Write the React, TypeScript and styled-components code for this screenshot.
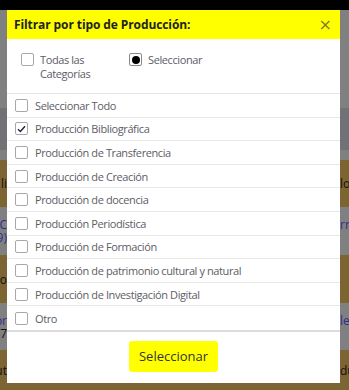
import React from "react";
import styled, { createGlobalStyle } from "styled-components";

const GlobalStyle = createGlobalStyle`
  html, body { margin: 0; padding: 0; }
  body {
    background: #808080;
    font-family: "Open Sans", "Noto Sans", sans-serif;
    overflow: hidden;
  }
`;

const Page = styled.div`
  position: relative;
  width: 349px;
  height: 390px;
  overflow: hidden;
  display: flex;
  flex-direction: column;
`;

const TopBar = styled.div`
  height: 10px;
  background: #000;
  flex: none;
`;

const Band = styled.div<{ $h: number; $tone: "gray" | "dark" | "brown" }>`
  flex: none;
  height: ${(p) => p.$h}px;
  background: ${(p) =>
    p.$tone === "brown" ? "#7d6433" : p.$tone === "dark" ? "#717275" : "#808080"};
  display: flex;
  flex-direction: column;
  justify-content: center;
  gap: 0;
  font-size: 12px;
  line-height: 13px;
`;

const BandLine = styled.div<{ $blue?: boolean }>`
  display: flex;
  justify-content: space-between;
  height: 13px;
  overflow: hidden;
  color: ${(p) => (p.$blue ? "#2b2f8a" : "#111")};
  white-space: nowrap;
`;

const EdgeLeft = styled.span`
  width: 7px;
  overflow: hidden;
  display: flex;
  justify-content: flex-end;
`;

const EdgeRight = styled.span`
  width: 9px;
  overflow: hidden;
  display: flex;
  justify-content: flex-start;
`;

const Overlay = styled.div`
  position: absolute;
  top: 10px;
  left: 7px;
  width: 333px;
  height: 373px;
  background: #fff;
  display: flex;
  flex-direction: column;
`;

const Header = styled.div`
  height: 29px;
  flex: none;
  background: #ffff00;
  display: flex;
  align-items: center;
  justify-content: space-between;
  padding: 0 8px 0 7px;
`;

const Title = styled.div`
  font-size: 12px;
  font-weight: 700;
  color: #222;
  letter-spacing: -0.1px;
`;

const Close = styled.div`
  font-size: 16px;
  line-height: 16px;
  color: #7f7f30;
  font-family: "DejaVu Sans", sans-serif;
`;

const ScopeRow = styled.div`
  height: 55px;
  flex: none;
  box-sizing: border-box;
  border-bottom: 1px solid #e6e6e6;
  display: flex;
  align-items: flex-start;
  padding: 14px 0 0 14px;
`;

const ScopeOption = styled.div<{ $w?: number }>`
  display: flex;
  align-items: flex-start;
  gap: 6px;
  width: ${(p) => (p.$w ? `${p.$w}px` : "auto")};
  font-size: 11px;
  line-height: 13.5px;
  letter-spacing: -0.4px;
  color: #5d5d66;
`;

const OptionText = styled.span<{ $w?: number }>`
  width: ${(p) => (p.$w ? `${p.$w}px` : "auto")};
`;

const Box = styled.span`
  flex: none;
  width: 11px;
  height: 11px;
  border: 1px solid #a8a8a8;
  border-radius: 2px;
  background: #fff;
  display: inline-flex;
  align-items: center;
  justify-content: center;
`;

const RadioBox = styled(Box)`
  border-color: #8a8a8a;
  &::after {
    content: "";
    width: 8px;
    height: 8px;
    border-radius: 50%;
    background: #000;
  }
`;

const List = styled.div`
  flex: none;
  display: flex;
  flex-direction: column;
  border-bottom: 2px solid #dcdcdc;
`;

const Row = styled.div`
  height: 23.6px;
  box-sizing: border-box;
  border-bottom: 1px solid #e8e8e8;
  display: flex;
  align-items: center;
  padding-left: 8px;
  gap: 7px;
  font-size: 11px;
  letter-spacing: -0.4px;
  color: #5d5d66;
  &:last-child {
    border-bottom: none;
  }
`;

const Footer = styled.div`
  flex: 1;
  display: flex;
  justify-content: center;
  padding-top: 9px;
`;

const Button = styled.button`
  width: 89px;
  height: 31px;
  background: #ffff00;
  border: none;
  border-radius: 3px;
  font-family: "Open Sans", "Noto Sans", sans-serif;
  font-size: 13px;
  color: #333;
  padding: 0;
`;

const Check = () => (
  <svg width="9" height="8" viewBox="0 0 9 8">
    <path d="M1 4.2 L3.4 6.5 L8 1.2" fill="none" stroke="#1b2540" strokeWidth="1.4" />
  </svg>
);

const items = [
  { label: "Seleccionar Todo", checked: false },
  { label: "Producción Bibliográfica", checked: true },
  { label: "Producción de Transferencia", checked: false },
  { label: "Producción de Creación", checked: false },
  { label: "Producción de docencia", checked: false },
  { label: "Producción Periodística", checked: false },
  { label: "Producción de Formación", checked: false },
  { label: "Producción de patrimonio cultural y natural", checked: false },
  { label: "Producción de Investigación Digital", checked: false },
  { label: "Otro", checked: false },
];

export default function App() {
  return (
    <>
      <GlobalStyle />
      <Page>
        <TopBar />
        <Band $h={98} $tone="gray" />
        <Band $h={42} $tone="dark" />
        <Band $h={10} $tone="gray" />
        <Band $h={47} $tone="brown">
          <BandLine>
            <EdgeLeft>li</EdgeLeft>
            <EdgeRight>lo</EdgeRight>
          </BandLine>
        </Band>
        <Band $h={48} $tone="gray">
          <BandLine $blue>
            <EdgeLeft>(C</EdgeLeft>
            <EdgeRight>rn</EdgeRight>
          </BandLine>
          <BandLine $blue>
            <EdgeLeft>9)</EdgeLeft>
            <EdgeRight />
          </BandLine>
        </Band>
        <Band $h={48} $tone="brown">
          <BandLine>
            <EdgeLeft>o</EdgeLeft>
            <EdgeRight />
          </BandLine>
        </Band>
        <Band $h={47} $tone="gray">
          <BandLine $blue>
            <EdgeLeft>or</EdgeLeft>
            <EdgeRight>le</EdgeRight>
          </BandLine>
          <BandLine>
            <EdgeLeft>47</EdgeLeft>
            <EdgeRight />
          </BandLine>
        </Band>
        <Band $h={40} $tone="brown">
          <BandLine>
            <EdgeLeft>ut</EdgeLeft>
            <EdgeRight>du</EdgeRight>
          </BandLine>
        </Band>

        <Overlay>
          <Header>
            <Title>Filtrar por tipo de Producción:</Title>
            <Close>×</Close>
          </Header>
          <ScopeRow>
            <ScopeOption $w={108}>
              <Box />
              <OptionText $w={70}>Todas las Categorías</OptionText>
            </ScopeOption>
            <ScopeOption>
              <RadioBox />
              <OptionText>Seleccionar</OptionText>
            </ScopeOption>
          </ScopeRow>
          <List>
            {items.map((it) => (
              <Row key={it.label}>
                <Box>{it.checked && <Check />}</Box>
                <span>{it.label}</span>
              </Row>
            ))}
          </List>
          <Footer>
            <Button>Seleccionar</Button>
          </Footer>
        </Overlay>
      </Page>
    </>
  );
}
